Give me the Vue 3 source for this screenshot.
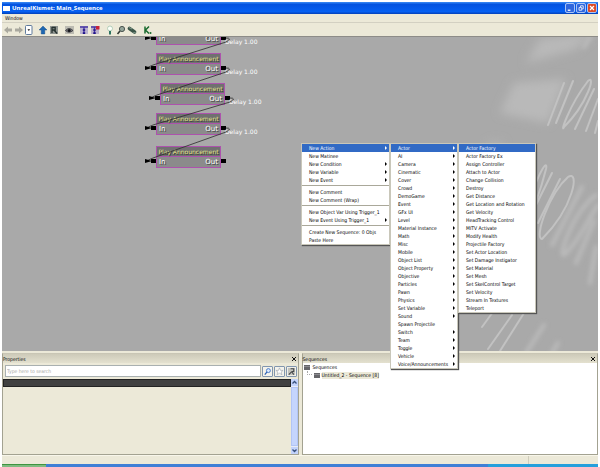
<template>
    <div class="window">
        <header class="titlebar">
            <span class="app-icon"></span>
            <h1>UnrealKismet: Main_Sequence</h1>
            <div class="window-buttons">
                <button type="button" aria-label="Minimize">
                    <svg viewBox="0 0 9 9"><path d="M2 7h3" stroke="#fff" stroke-width="1.5" /></svg>
                </button>
                <button type="button" aria-label="Restore">
                    <svg viewBox="0 0 9 9" fill="none" stroke="#fff" stroke-width=".9">
                        <path d="M4 3.500V2h3v3.500H5.500M2.300 4h3v3h-3z" />
                    </svg>
                </button>
                <button type="button" class="close" aria-label="Close">
                    <svg viewBox="0 0 9 9"><path d="M2.300 2.300l4.400 4.400M6.700 2.300L2.300 6.700" stroke="#fff" stroke-width="1.400" /></svg>
                </button>
            </div>
        </header>

        <nav class="menubar">
            <button type="button">Window</button>
        </nav>

        <div class="toolbar">
            <div class="tool-group">
                <button type="button" aria-label="Back">
                    <svg viewBox="0 0 10 10"><path d="M1 5l4-3.500v2h4v3H5v2z" fill="#aaa99f" /></svg>
                </button>
                <button type="button" aria-label="Forward">
                    <svg viewBox="0 0 10 10"><path d="M9 5L5 1.500v2H1v3h4v2z" fill="#aaa99f" /></svg>
                </button>
                <button type="button" class="boxed" aria-label="History">
                    <svg viewBox="0 0 8 10">
                        <rect x=".5" y=".5" width="6.500" height="9" rx="1" fill="#fff" stroke="#5f7b9c" />
                        <path d="M2.500 4.300h2.600L3.800 6z" fill="#111" />
                    </svg>
                </button>
            </div>
            <div class="tool-group">
                <button type="button" aria-label="Parent sequence">
                    <svg viewBox="0 0 10 10"><path d="M5 1l4 4H6.800v4H3.200V5H1z" fill="#1f67b0" stroke="#144a86" stroke-width=".4" /></svg>
                </button>
                <button type="button" aria-label="Rename sequence">
                    <svg viewBox="0 0 10 10">
                        <rect x="1" y="1" width="8" height="8" fill="#8f9490" />
                        <path d="M3 2v6M3 2.500h3.200v2.500H3M5 5l3 3.500" fill="none" stroke="#25312f" stroke-width="1.300" />
                    </svg>
                </button>
            </div>
            <div class="tool-group">
                <button type="button" aria-label="Hide connectors">
                    <svg viewBox="0 0 10 10">
                        <rect x="1" y="1" width="9" height="8" fill="#bcbbb2" />
                        <path d="M1.500 5.500Q5 1.500 9 5.500Q5 9 1.500 5.500z" fill="#77777a" stroke="#33343a" stroke-width=".8" />
                        <circle cx="5.200" cy="5.400" r="1.500" fill="#15161b" />
                    </svg>
                </button>
            </div>
            <div class="tool-group">
                <button type="button" aria-label="Show all connectors">
                    <svg viewBox="0 0 10 10">
                        <rect x="1" y="1" width="8" height="8" fill="#b9b2cf" />
                        <path d="M1 2h8M5 2v7" stroke="#4838a4" stroke-width="1.400" />
                        <path d="M3.800 4.200h2.400v1.600H3.800zM3.800 7.200h2.400v1.800H3.800z" fill="#211489" />
                    </svg>
                </button>
                <button type="button" aria-label="Hide unused connectors">
                    <svg viewBox="0 0 10 10">
                        <rect x="1" y="1" width="8" height="8" fill="#bdb3cb" />
                        <path d="M1 2h6M4.500 2v7" stroke="#4838a4" stroke-width="1.400" />
                        <path d="M3.300 4.200h2.400v1.600H3.300zM3.300 7.200h2.400v1.800H3.300z" fill="#211489" />
                        <path d="M6 1h3.500v3.500H6z" fill="#c8233a" />
                    </svg>
                </button>
            </div>
            <div class="tool-group">
                <button type="button" aria-label="Toggle hints">
                    <svg viewBox="0 0 10 10">
                        <circle cx="5" cy="3.500" r="2.500" fill="#fbfff8" stroke="#a3c4ae" stroke-width=".8" />
                        <path d="M4 6h2v3.500H4z" fill="#2d7360" />
                    </svg>
                </button>
                <button type="button" aria-label="Search">
                    <svg viewBox="0 0 10 10">
                        <path d="M1.500 9L4 6" stroke="#333b36" stroke-width="1.600" />
                        <circle cx="6" cy="4" r="2.600" fill="#94a59a" stroke="#4b5550" />
                    </svg>
                </button>
                <button type="button" aria-label="Update list">
                    <svg viewBox="0 0 10 10">
                        <path d="M2.500 3.500l5 3.500" stroke="#3b5548" stroke-width="3.600" stroke-linecap="round" />
                        <path d="M2 2.500l3 1.500M6 8l2.500-.5" stroke="#96ad9f" stroke-width=".8" />
                    </svg>
                </button>
            </div>
            <div class="tool-group">
                <button type="button" aria-label="Open Kismet">
                    <svg viewBox="0 0 10 10">
                        <path d="M3 1.500v7M7 1.500L3.500 5L7 8.500" fill="none" stroke="#17692c" stroke-width="1.500" />
                        <circle cx="8.500" cy="8" r="1" fill="#17692c" />
                    </svg>
                </button>
            </div>
        </div>

        <main class="workspace">
            <div class="canvas">
                <svg class="streaks" viewBox="0 0 118 316" fill="none" stroke-linecap="round">
                    <defs>
                        <filter id="soft" x="-40%" y="-40%" width="180%" height="180%"><feGaussianBlur stdDeviation="5" /></filter>
                        <filter id="fine" x="-20%" y="-20%" width="140%" height="140%"><feGaussianBlur stdDeviation=".7" /></filter>
                        <filter id="mid" x="-20%" y="-20%" width="140%" height="140%"><feGaussianBlur stdDeviation="2" /></filter>
                    </defs>
                    <g fill="#b9b9b9" filter="url(#soft)">
                        <path d="M46 26L60 2L114 -4L96 12z" />
                        <path d="M20 76L34 46L86 42L68 86z" />
                        <path d="M0 112l14-8l10 2l-8 10z" fill="#b3b3b3" />
                    </g>
                    <g stroke="#c2c2c2" filter="url(#fine)">
                        <path v-for="(d, index) in sharpStreaks" :key="index" :d="d" stroke-width="2" />
                    </g>
                    <g stroke="#bbbbbb" filter="url(#mid)">
                        <path v-for="(d, index) in softStreaks" :key="index" :d="d" stroke-width="4" />
                    </g>
                </svg>

                <section v-for="(node, index) in nodes" :key="index" class="node"
                    :style="{ left: `${node.x}px`, top: `${node.y}px` }">
                    <h2>{{ node.title }}</h2>
                    <div class="node-body">
                        <span>In</span>
                        <span>Out</span>
                    </div>
                    <i class="pin pin-in"></i>
                    <i class="pin pin-out"></i>
                    <span v-if="index < nodes.length - 1" class="delay">Delay 1.00</span>
                </section>

                <svg class="wires">
                    <path v-for="(d, index) in wires" :key="index" :d="d" fill="none" stroke="#2c2c2c" stroke-width=".8" />
                    <path v-for="(node, index) in nodes" :key="`arrow${index}`" :d="arrowHead(node)" fill="#000" />
                </svg>
            </div>

            <div class="menus">
                <ul v-for="menu in menus" :key="menu.name" class="menu" :class="menu.name">
                    <li v-for="(item, index) in menu.items" :key="index" :class="{ separator: !item }">
                        <button v-if="item" type="button" :class="{ active: index === 0 }">
                            <span>{{ item.replace(' >', '') }}</span>
                            <i v-if="item.endsWith(' >')" class="arrow"></i>
                        </button>
                    </li>
                </ul>
            </div>
        </main>

        <div class="panels">
            <section class="panel">
                <div class="panel-head">
                    <h2>Properties</h2>
                    <button type="button" aria-label="Close Properties">
                        <svg viewBox="0 0 6 6"><path d="M1 1l4 4M5 1L1 5" stroke="#111" /></svg>
                    </button>
                </div>
                <div class="search">
                    <input type="text" placeholder="Type here to search" aria-label="Search properties">
                    <button type="button" aria-label="Search">
                        <svg viewBox="0 0 10 10">
                            <path d="M2 8.500L4.500 5.500" stroke="#2f62b4" stroke-width="1.400" />
                            <circle cx="6" cy="4" r="2.200" fill="#dcebff" stroke="#3f73c3" />
                        </svg>
                    </button>
                    <button type="button" aria-label="Favorites">
                        <svg viewBox="0 0 10 10">
                            <path d="M5 1l1.200 2.800h2.800l-2.200 1.800l.9 3L5 6.900L2.300 8.600l.9-3L1 3.800h2.800z" fill="#fff" stroke="#9fa5ae" stroke-width=".7" />
                        </svg>
                    </button>
                    <button type="button" aria-label="Options">
                        <svg viewBox="0 0 10 10">
                            <rect x="1" y="1" width="8" height="8" fill="#c4c4bd" />
                            <path d="M2 8.500l3-3M4 2h3.500v3H5M5.500 5.500l2 3" fill="none" stroke="#44474a" stroke-width="1.200" />
                        </svg>
                    </button>
                </div>
                <div class="properties">
                    <div class="property-list">
                        <div class="property-head"></div>
                    </div>
                    <div class="scrollbar">
                        <button type="button" aria-label="Scroll up">
                            <svg viewBox="0 0 7 7"><path d="M1.500 4.500l2-2l2 2" fill="none" stroke="#38507c" stroke-width="1.300" /></svg>
                        </button>
                        <div class="thumb"></div>
                        <button type="button" aria-label="Scroll down">
                            <svg viewBox="0 0 7 7"><path d="M1.500 2.500l2 2l2-2" fill="none" stroke="#38507c" stroke-width="1.300" /></svg>
                        </button>
                    </div>
                </div>
            </section>

            <section class="panel">
                <div class="panel-head">
                    <h2>Sequences</h2>
                    <button type="button" aria-label="Close Sequences">
                        <svg viewBox="0 0 6 6"><path d="M1 1l4 4M5 1L1 5" stroke="#111" /></svg>
                    </button>
                </div>
                <ul class="tree">
                    <li>
                        <svg class="folder" viewBox="0 0 6 5"><path d="M0 0h6v5H0z" fill="#66666a" /><path d="M0 1.500h6" stroke="#a5a5aa" stroke-width=".6" /></svg>
                        <span>Sequences</span>
                    </li>
                    <li class="child">
                        <i class="branch"></i>
                        <svg class="folder" viewBox="0 0 6 5"><path d="M0 0h6v5H0z" fill="#66666a" /><path d="M0 1.500h6" stroke="#a5a5aa" stroke-width=".6" /></svg>
                        <span class="selected">Untitled_2 - Sequence [8]</span>
                    </li>
                </ul>
            </section>
        </div>

        <footer class="statusbar"><span></span></footer>
        <div class="taskbar"><i class="start"></i><i class="tasks"></i><i class="tray"></i></div>
    </div>
</template>

<script setup>
// Node positions on the free canvas, the first one is scrolled half out of view
const nodes = [
    { title: '', x: 154, y: -14 },
    { title: 'Play Announcement', x: 154, y: 16 },
    { title: 'Play Announcement', x: 158, y: 46 },
    { title: 'Play Announcement', x: 154, y: 76 },
    { title: 'Play Announcement', x: 154, y: 109 }
]

// Each output is wired to the input of the next node
const wires = nodes.slice(1).map((next, index) => {
    const from = nodes[index]
    const startX = from.x + 70
    const startY = from.y + 15
    const endX = next.x - 9
    const endY = next.y + 15
    return `M${startX} ${startY}q7 0 0 4L${endX + 6} ${endY - 3}q-5 2 -6 3`
})

const arrowHead = (node) => `M${node.x - 11} ${node.y + 13}l7 2l-7 2z`

// A trailing " >" marks an item with a submenu, null is a separator
const menus = [
    {
        name: 'context',
        items: [
            'New Action >', 'New Matinee', 'New Condition >', 'New Variable >', 'New Event >', null,
            'New Comment', 'New Comment (Wrap)', null,
            'New Object Var Using Trigger_1', 'New Event Using Trigger_1 >', null,
            'Create New Sequence: 0 Objs', 'Paste Here'
        ]
    },
    {
        name: 'actions',
        items: [
            'Actor >', 'AI >', 'Camera >', 'Cinematic >', 'Cover >', 'Crowd >', 'DemoGame >', 'Event >',
            'GFx UI >', 'Level >', 'Material Instance >', 'Math >', 'Misc >', 'Mobile >', 'Object List >',
            'Object Property >', 'Objective >', 'Particles >', 'Pawn >', 'Physics >', 'Set Variable >',
            'Sound >', 'Spawn Projectile', 'Switch >', 'Team >', 'Toggle >', 'Vehicle >',
            'Voice/Announcements >'
        ]
    },
    {
        name: 'actor',
        items: [
            'Actor Factory', 'Actor Factory Ex', 'Assign Controller', 'Attach to Actor', 'Change Collision',
            'Destroy', 'Get Distance', 'Get Location and Rotation', 'Get Velocity', 'HeadTracking Control',
            'MITV Activate', 'Modify Health', 'Projectile Factory', 'Set Actor Location',
            'Set Damage Instigator', 'Set Material', 'Set Mesh', 'Set SkelControl Target', 'Set Velocity',
            'Stream In Textures', 'Teleport'
        ]
    }
]

// Blurred binary digits in the canvas backdrop
const sharpStreaks = [
    'M84 46L68 88',
    'M93 44L76 86',
    'M84 90C80 98 88 70 108 44C116 36 108 66 84 90',
    'M114 52L95 92',
    'M118 62L106 94',
    'M118 84L115 96',
    'M50 162C60 132 68 122 66 132C62 148 54 172 46 186',
    'M72 136L54 172',
    'M80 142L58 186',
    'M62 202C54 202 68 158 88 140C100 132 94 170 62 202',
    'M18 268L2 290',
    'M32 278L8 312',
    'M44 276L20 314'
]
const softStreaks = [
    'M102 150L72 208',
    'M84 218C78 220 92 176 116 158M84 218C98 206 108 182 118 168',
    'M114 184L96 226',
    'M116 210L110 246',
    'M64 288L46 316',
    'M78 306L72 316',
    'M110 0L104 10'
]
</script>

<style>
html,
body,
#app {
    height: 100%;
}

body {
    margin: 0;
    background: #fff;
}
</style>

<style scoped>
* {
    box-sizing: border-box;
}

.window {
    display: flex;
    flex-direction: column;
    height: 100%;
    padding: 2px 2px 0;
    overflow: hidden;
    font-family: "DejaVu Sans Condensed", "Liberation Sans", sans-serif;
    font-size: 5px;
    line-height: 8px;
    color: #000;
}

button {
    display: block;
    padding: 0;
    border: 0;
    background: none;
    font: inherit;
    color: inherit;
}

svg {
    display: block;
}

h1,
h2,
ul {
    margin: 0;
    padding: 0;
    font: inherit;
    list-style: none;
}

/* Title bar */
.titlebar {
    display: flex;
    flex: none;
    align-items: center;
    gap: 2px;
    height: 12px;
    padding: 0 1px;
    background: linear-gradient(#3d8df5, #0453e0 20%, #0560f2 80%, #0340b8);
    color: #fff;
}

.titlebar h1 {
    flex: 1;
    font-family: "Open Sans", sans-serif;
    font-size: 6px;
    font-weight: 700;
}

.app-icon {
    width: 7px;
    height: 5px;
    background: #fff;
}

.window-buttons {
    display: flex;
    gap: 1px;
}

.window-buttons button {
    width: 10px;
    height: 10px;
    border: 1px solid #a9c4f5;
    border-radius: 2px;
    background: #2f66dd;
}

.window-buttons .close {
    background: #dd4a26;
}

/* Menu bar and toolbar */
.menubar {
    flex: none;
    height: 9px;
    padding: 0 3px;
    border-bottom: 1px solid #d3d0c2;
    background: #ece9d8;
}

.toolbar {
    display: flex;
    flex: none;
    align-items: center;
    gap: 5px;
    height: 13px;
    padding: 0 1px;
    background: #ece9d8;
}

.tool-group {
    display: flex;
    gap: 1px;
}

.toolbar button {
    width: 10px;
    height: 10px;
}

.toolbar .boxed {
    width: 8px;
}

/* Canvas */
.workspace {
    position: relative;
    display: flex;
    flex: 1;
    min-height: 0;
}

.canvas {
    position: relative;
    flex: 1;
    overflow: hidden;
    border-top: 1px solid #8d8c88;
    background: #a9a9a9;
}

.streaks {
    position: absolute;
    top: 0;
    right: 0;
    width: 118px;
    height: 316px;
}

.wires {
    position: absolute;
    inset: 0;
    width: 100%;
    height: 100%;
}

.node {
    position: absolute;
    width: 65px;
    height: 22px;
    border: 1px solid #ad52ad;
    background: #8b8b8b;
    font-family: "DejaVu Sans", sans-serif;
    font-size: 6px;
}

.node h2 {
    height: 10px;
    border-bottom: 1px solid #ad52ad;
    background: #707070;
    line-height: 9px;
    text-align: center;
    white-space: nowrap;
    color: #e6e68c;
    text-shadow: 1px 1px 0 #333;
}

.node-body {
    display: flex;
    justify-content: space-between;
    padding: 1px 2px;
    font-size: 7px;
    color: #fff;
    text-shadow: 1px 1px 0 #444;
}

.pin {
    position: absolute;
    top: 12px;
    width: 5px;
    height: 4px;
    background: #000;
}

.pin-in {
    left: -6px;
}

.pin-out {
    right: -6px;
}

.delay {
    position: absolute;
    top: 14px;
    left: 68px;
    white-space: nowrap;
    color: #fff;
}

/* Context menus */
.menus {
    position: absolute;
    z-index: 2;
    top: 107px;
    left: 299px;
    display: flex;
    align-items: flex-start;
}

.menu {
    border: 1px solid #c9c7ba;
    background: #fff;
    box-shadow: 1px 1px 1px #555;
}

.context {
    width: 89px;
}

.actions {
    width: 68px;
}

.actor {
    width: 78px;
}

.menu button {
    display: flex;
    align-items: center;
    justify-content: space-between;
    width: 100%;
    height: 8px;
    padding: 0 2px 0 7px;
    white-space: nowrap;
}

.menu .active {
    background: #316ac5;
    color: #fff;
}

.arrow {
    border: 2px solid transparent;
    border-right-width: 0;
    border-left-color: currentColor;
}

.separator {
    height: 4px;
    border-bottom: 2px solid #fff;
    background: linear-gradient(#fff 1px, #aaa89a 1px);
}

/* Bottom panels */
.panels {
    display: flex;
    flex: none;
    gap: 3px;
    height: 104px;
    padding-top: 2px;
    background: #ece9d8;
}

.panel {
    display: flex;
    flex: 1;
    flex-direction: column;
    border: 1px solid #a3a291;
    border-top-color: #c9c6b5;
    background: #ece9d8;
}

.panel-head {
    display: flex;
    flex: none;
    align-items: center;
    justify-content: space-between;
    height: 9px;
    padding-right: 1px;
    background: linear-gradient(#cdcab9, #e4e1cf);
}

.panel-head button {
    width: 6px;
    height: 6px;
}

.search {
    display: flex;
    flex: none;
    align-items: center;
    gap: 1px;
    height: 16px;
    padding: 0 1px 0 2px;
}

.search input {
    flex: 1;
    min-width: 0;
    height: 12px;
    padding: 0 1px;
    border: 1px solid #a9b0b0;
    border-radius: 0;
    background: #fff;
    font: inherit;
}

.search input::placeholder {
    color: #a9a9a5;
    opacity: 1;
}

.search button {
    width: 11px;
    height: 11px;
    border: 1px solid #8296ae;
    border-radius: 1px;
    background: #f4f3ec;
}

.properties {
    display: flex;
    flex: 1;
}

.property-list {
    flex: 1;
}

.property-head {
    height: 8px;
    border: 1px solid #222;
    background: #404040;
}

.scrollbar {
    display: flex;
    flex-direction: column;
    width: 7px;
    background: #e8ecf8;
}

.scrollbar button {
    height: 7px;
    background: #c3d3fb;
}

.thumb {
    flex: 1;
    margin: 1px 0;
    border: 1px solid #b2c5f5;
    background: #c5d5fd;
}

.tree {
    flex: 1;
    padding: 0 1px;
    background: #fff;
}

.tree li {
    display: flex;
    align-items: center;
    gap: 3px;
    height: 8px;
}

.tree .child {
    gap: 2px;
    padding-left: 3px;
}

.folder {
    width: 6px;
    height: 5px;
}

.branch {
    align-self: flex-start;
    width: 5px;
    height: 4px;
    border: 1px dotted #aaa;
    border-width: 0 0 1px 1px;
}

.selected {
    background: #ece9d8;
    line-height: 7px;
}

/* Status bar and task bar */
.statusbar {
    display: flex;
    flex: none;
    justify-content: flex-end;
    height: 9px;
    border-top: 1px solid #f8f6ea;
    background: #ece9d8;
}

.statusbar span {
    width: 70px;
    border-left: 1px solid #d0cdbc;
}

.taskbar {
    display: flex;
    flex: none;
    height: 3px;
}

.start {
    width: 44px;
    border-top: 1px solid #3f9440;
    background: #7fbb80;
}

.tasks {
    flex: 4;
    background: #3f7fd6;
}

.tray {
    flex: 1;
    background: #259fdc;
}
</style>
